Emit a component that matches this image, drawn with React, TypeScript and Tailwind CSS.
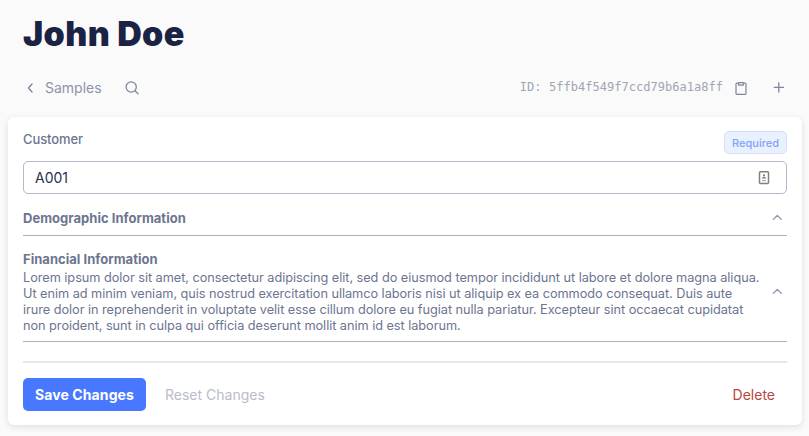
import React from "react";

function Chevron() {
  return (
    <svg className="mr-[4px] h-[12px] w-[12px] shrink-0" viewBox="0 0 12 12" fill="none" stroke="#8a92a8" strokeWidth="1.3" strokeLinecap="round" strokeLinejoin="round">
      <path d="M2.3 7.4 L6.3 3.4 L10.3 7.4" />
    </svg>
  );
}

export default function App() {
  return (
    <div className="flex h-[436px] w-[809px] flex-col overflow-hidden bg-[#fafafa] font-['Inter',sans-serif] text-[#6c7590]">
      <h1 className="ml-[23px] mt-[12px] h-[44px] whitespace-nowrap text-[34px] font-black leading-[43px] tracking-[0.35px] text-[#1a2344]">John Doe</h1>

      <div className="mt-[16px] flex h-[32px] items-center pl-[23px] pr-[22px] text-[#8e94a9]">
        <svg className="h-[16px] w-[16px]" viewBox="0 0 16 16" fill="none" stroke="#7f869c" strokeWidth="1.4" strokeLinecap="round" strokeLinejoin="round">
          <path d="M9 4 L5.5 8 L9 12" />
        </svg>
        <span className="ml-[6px] w-[57px] whitespace-nowrap text-[14px] leading-[20px]">Samples</span>
        <svg className="ml-[22px] h-[16px] w-[16px]" viewBox="0 0 16 16" fill="none" stroke="#7f869c" strokeWidth="1.3" strokeLinecap="round">
          <circle cx="7.2" cy="7" r="5.1" />
          <path d="M11 10.8 L14 13.8" />
        </svg>
        <span className="ml-auto mr-[10px] whitespace-pre pb-[2px] font-['DejaVu_Sans_Mono',monospace] text-[12px] leading-[16px] tracking-[0.03px] text-[#a0a5b5]">ID: 5ffb4f549f7ccd79b6a1a8ff</span>
        <svg className="h-[16px] w-[16px]" viewBox="0 0 16 16" fill="none" stroke="#7f869c" strokeWidth="1.2" strokeLinejoin="round">
          <path d="M5.5 3.2 H3.9 Q3 3.2 3 4.1 V13.6 Q3 14.4 3.9 14.4 H12.1 Q13 14.4 13 13.6 V4.1 Q13 3.2 12.1 3.2 H10.5" />
          <path d="M5.7 2.6 H10.3 V5.2 H5.7 Z" />
        </svg>
        <svg className="ml-[22px] h-[16px] w-[16px]" viewBox="0 0 16 16" fill="none" stroke="#7f869c" strokeWidth="1.3" strokeLinecap="round">
          <path d="M7.8 2.8 V12 M3.3 7.4 H12.5" />
        </svg>
      </div>

      <main className="ml-[8px] mt-[13px] flex h-[308px] w-[794px] flex-col rounded-[6px] bg-white px-[15px] shadow-[0_2px_6px_rgba(20,30,60,0.12)]">
        <div className="mt-[14px] flex h-[23px] items-start justify-between">
          <label htmlFor="customer" className="text-[13px] font-medium leading-[17px] tracking-[-0.1px]">Customer</label>
          <span className="flex h-[23px] w-[63px] items-center justify-center rounded-[5px] border border-[#d2e0fe] bg-[#e9f1ff] pt-px text-[11px] font-medium text-[#83a3f5]">Required</span>
        </div>

        <div className="mt-[7px] flex h-[33px] items-center rounded-[5px] border border-[#b5b8ca] pl-[11px] pr-[16px]">
          <input id="customer" defaultValue="A001" className="h-[28px] min-w-0 flex-1 bg-transparent text-[14px] leading-[20px] text-[#27304e] outline-none" />
          <svg className="h-[14px] w-[12px]" viewBox="0 0 12 14" fill="none">
            <rect x="1.5" y="0.8" width="9" height="11.7" rx="1" stroke="#808080" strokeWidth="1.5" />
            <circle cx="6" cy="4.3" r="1.1" fill="#777" />
            <path d="M4 7.6 V6.9 Q6 4.7 8 6.9 V7.6 Z" fill="#777" />
            <path d="M4 9.7 H8" stroke="#999" />
          </svg>
        </div>

        <section className="flex h-[42px] items-center justify-between border-b border-[#acafb4] pb-0 pt-[6px]">
          <h2 className="text-[13px] font-bold leading-[18px] tracking-[0.03px]">Demographic Information</h2>
          <Chevron />
        </section>

        <section className="flex h-[106px] items-center justify-between border-b border-[#acafb4] pt-[6px]">
          <div className="h-[82px] w-[740px]">
            <h2 className="h-[19px] text-[13px] font-bold leading-[16px] tracking-[0.03px]">Financial Information</h2>
            <p className="whitespace-nowrap text-[12.75px] leading-[16px] tracking-[-0.05px]">
              Lorem ipsum dolor sit amet, consectetur adipiscing elit, sed do eiusmod tempor incididunt ut labore et dolore magna aliqua.<br />
              Ut enim ad minim veniam, quis nostrud exercitation ullamco laboris nisi ut aliquip ex ea commodo consequat. Duis aute<br />
              irure dolor in reprehenderit in voluptate velit esse cillum dolore eu fugiat nulla pariatur. Excepteur sint occaecat cupidatat<br />
              non proident, sunt in culpa qui officia deserunt mollit anim id est laborum.
            </p>
          </div>
          <Chevron />
        </section>

        <div className="mt-[19px] h-[2px] shrink-0 bg-[#e5e7ed]" />
        <footer className="mt-[15px] flex h-[33px] shrink-0 items-center">
          <button className="h-[33px] w-[123px] whitespace-nowrap rounded-[5px] bg-[#4878ff] text-[14px] font-bold tracking-[0.1px] text-white">Save Changes</button>
          <button className="ml-[19px] whitespace-nowrap text-[14px] text-[#b9bdcb]">Reset Changes</button>
          <button className="ml-auto mr-[12px] text-[14px] text-[#b94740]">Delete</button>
        </footer>
      </main>
    </div>
  );
}
